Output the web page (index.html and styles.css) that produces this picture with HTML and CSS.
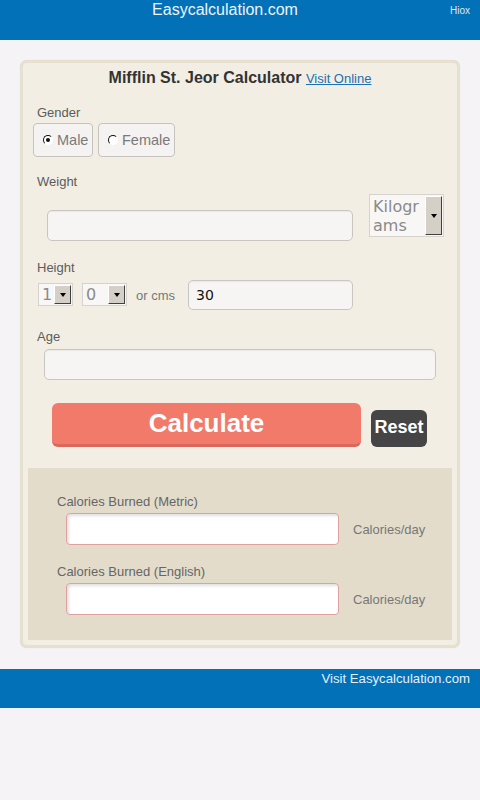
FILE: index.html
```html
<!DOCTYPE html>
<html lang="en">
<head>
  <meta charset="UTF-8">
  <title>Mifflin St. Jeor Calculator</title>
  <link rel="stylesheet" href="styles.css">
</head>
<body>
  <header class="top">
    <div class="brand">Easycalculation.com</div>
    <a class="hiox" href="#">Hiox</a>
  </header>

  <div class="card">
    <h1 class="title">Mifflin St. Jeor Calculator <a href="#">Visit Online</a></h1>

    <div class="lbl lbl-gender">Gender</div>
    <div class="radios">
      <label class="radio"><span class="dot on"></span>Male</label>
      <label class="radio"><span class="dot"></span>Female</label>
    </div>

    <div class="lbl lbl-weight">Weight</div>
    <div class="row weight-row">
      <div class="inp inp-weight"></div>
      <div class="sel sel-unit">
        <span class="sel-txt">Kilogr<br>ams</span>
        <span class="sel-btn"><i></i></span>
      </div>
    </div>

    <div class="lbl lbl-height">Height</div>
    <div class="row height-row">
      <div class="sel sel-ft"><span class="sel-txt">1</span><span class="sel-btn"><i></i></span></div>
      <div class="sel sel-in"><span class="sel-txt">0</span><span class="sel-btn"><i></i></span></div>
      <span class="orcms">or cms</span>
      <div class="inp inp-cms">30</div>
    </div>

    <div class="lbl lbl-age">Age</div>
    <div class="inp inp-age"></div>

    <div class="row btn-row">
      <button class="calc">Calculate</button>
      <button class="reset">Reset</button>
    </div>

    <div class="result">
      <div class="rlbl">Calories Burned (Metric)</div>
      <div class="row rrow">
        <div class="rinp"></div>
        <span class="unit">Calories/day</span>
      </div>
      <div class="rlbl rlbl2">Calories Burned (English)</div>
      <div class="row rrow">
        <div class="rinp"></div>
        <span class="unit">Calories/day</span>
      </div>
    </div>
  </div>

  <footer class="bottom">
    <a href="#">Visit Easycalculation.com</a>
  </footer>
</body>
</html>
```

FILE: styles.css
```css
* { box-sizing: border-box; margin: 0; padding: 0; }
body {
  font-family: "Liberation Sans", Arial, sans-serif;
  background: #f5f3f5;
  min-height: 800px;
}
a { text-decoration: none; }

/* header / footer bars */
.top {
  background: #0271b8;
  height: 40px;
  display: flex;
}
.brand {
  flex: 1;
  text-align: center;
  color: #eef4fb;
  font-size: 16px;
  line-height: 19px;
}
.hiox {
  color: #dfe9f4;
  font-size: 10px;
  line-height: 12px;
  padding: 5px 10px 0 0;
}
.bottom {
  margin-top: 21px;
  background: #0271b8;
  height: 39px;
  text-align: right;
  padding: 0 10px 0 0;
}
.bottom a { color: #e6f0fa; font-size: 13.2px; line-height: 18px; }

/* card */
.card {
  margin: 20px 20px 0 20px;
  background: #f2eee3;
  border: 3px solid #e5e0d0;
  border-radius: 7px;
  height: 588px;
  box-shadow: 0 0 1px #d8d3c3;
}
.title {
  margin-top: 5px;
  text-align: center;
  font-size: 16px;
  line-height: 20px;
  color: #333;
}
.title a {
  font-size: 13px;
  font-weight: normal;
  color: #1a6fb5;
  text-decoration: underline;
}

.lbl {
  margin-left: 14px;
  font-size: 13px;
  line-height: 16px;
  color: #5c5c5c;
}
.lbl-gender { margin-top: 16px; }
.lbl-weight { margin-top: 17px; }
.lbl-height { margin-top: 19px; }
.lbl-age { margin-top: 19px; }

.row { display: flex; align-items: flex-start; }

/* radios */
.radios { display: flex; gap: 5px; margin: 2px 0 0 10px; }
.radio {
  display: flex; align-items: center;
  height: 34px;
  padding: 0 0 0 9px;
  border: 1px solid #c6c3bf;
  border-radius: 4px;
  background: #f5f3f1;
  color: #7a7a7a;
  font-size: 14.5px;
}
.radio:first-child { width: 60px; }
.radio:last-child { width: 77px; }
.dot {
  width: 10px; height: 10px;
  margin-right: 4px;
  border-radius: 50%;
  border: 1.5px solid #fff;
  border-top-color: #111;
  border-left-color: #111;
  background: #fff;
  position: relative;
}
.dot.on::after {
  content: "";
  position: absolute;
  left: 1.5px; top: 1.5px;
  width: 4px; height: 4px;
  border-radius: 50%;
  background: #111;
}

/* text inputs */
.inp {
  background: #f6f5f3;
  border: 1px solid #c9c6c2;
  border-radius: 5px;
  box-shadow: inset 0 1px 1px rgba(0,0,0,0.05);
  font-family: "DejaVu Sans", sans-serif;
  font-size: 14px;
  color: #111;
}
.weight-row { margin-top: 4px; }
.inp-weight { margin: 16px 0 0 24px; width: 306px; height: 31px; }
.height-row { margin-top: 4px; }
.inp-cms { width: 165px; height: 30px; padding: 0 0 0 7px; line-height: 28px; }
.inp-age { margin: 4px 0 0 21px; width: 392px; height: 31px; }

/* selects */
.sel {
  display: flex;
  border: 1px solid #d6d3cf;
  background: #f8f7f5;
  font-family: "DejaVu Sans", sans-serif;
  color: #8a8a8a;
  font-size: 16px;
}
.sel-txt { flex: 1; padding-left: 3px; }
.sel-btn {
  width: 17px;
  margin: 1px 1px 1px 0;
  background: #d4d0c8;
  border: 1px solid #fff;
  border-right-color: #404040;
  border-bottom-color: #404040;
  display: flex; align-items: center; justify-content: center;
}
.sel-btn i {
  width: 0; height: 0;
  border-left: 3px solid transparent;
  border-right: 3px solid transparent;
  border-top: 4px solid #000;
}
.sel-unit { margin-left: 16px; width: 75px; height: 43px; line-height: 19px; }
.sel-unit .sel-txt { padding: 2px 0 0 3px; }
.sel-ft { margin: 3px 0 0 15px; width: 35px; height: 23px; line-height: 21px; }
.sel-in { margin: 3px 0 0 9px; width: 45px; height: 23px; line-height: 21px; }
.orcms {
  margin: 8px 0 0 9px;
  width: 52px;
  font-size: 13px;
  color: #777;
}

/* buttons */
.btn-row { margin-top: 23px; align-items: flex-end; }
.calc {
  margin-left: 29px;
  width: 309px; height: 44px;
  background: #f27a6b;
  border: none;
  border-bottom: 3px solid #d9675b;
  border-radius: 6px;
  color: #fff;
  font-family: "Liberation Sans", Arial, sans-serif;
  font-weight: bold;
  font-size: 26px;
}
.reset {
  margin-left: 10px;
  width: 56px; height: 37px;
  background: #454545;
  border: none;
  border-radius: 6px;
  padding-bottom: 3px;
  color: #fff;
  font-family: "Liberation Sans", Arial, sans-serif;
  font-weight: bold;
  font-size: 18px;
}

/* result panel */
.result {
  margin: 21px 5px 0 5px;
  height: 172px;
  background: #e3dccb;
  padding: 26px 0 0 29px;
}
.rlbl { font-size: 13px; line-height: 16px; color: #666; }
.rlbl2 { margin-top: 19px; }
.rrow { margin-top: 3px; align-items: center; }
.rinp {
  margin-left: 9px;
  width: 273px; height: 32px;
  background: #fff;
  border: 1px solid #e0a0a0;
  border-radius: 4px;
  box-shadow: inset 2px 2px 3px rgba(0,0,0,0.12);
}
.unit { margin-left: 14px; font-size: 13px; color: #777; }
```
